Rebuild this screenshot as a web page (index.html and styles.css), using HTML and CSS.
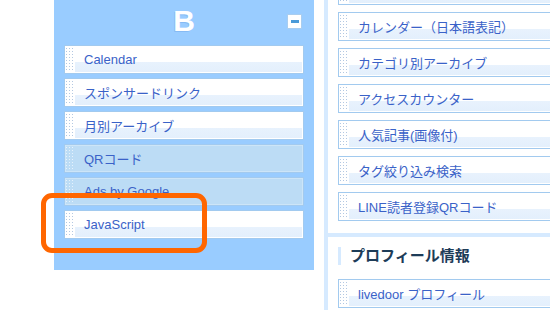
FILE: index.html
```html
<!doctype html>
<html lang="ja">
  <head>
    <meta charset="UTF-8" />
    <title>ブログパーツ</title>
    <link rel="stylesheet" href="styles.css">
  </head>
  <body>
    <div class="side">
      <div class="side-head">
        <span class="side-title">B</span>
        <span class="fold"><span class="fold-bar"></span></span>
      </div>
      <ul class="parts">
        <li class="part"><span class="grip"></span>Calendar</li>
        <li class="part"><span class="grip"></span>スポンサードリンク</li>
        <li class="part"><span class="grip"></span>月別アーカイブ</li>
        <li class="part off"><span class="grip"></span>QRコード</li>
        <li class="part off"><span class="grip"></span>Ads by Google</li>
        <li class="part"><span class="grip"></span>JavaScript</li>
      </ul>
    </div>

    <div class="main">
      <div class="box">
        <ul class="parts wide">
          <li class="part"><span class="grip"></span></li>
          <li class="part"><span class="grip"></span>カレンダー（日本語表記）</li>
          <li class="part"><span class="grip"></span>カテゴリ別アーカイブ</li>
          <li class="part"><span class="grip"></span>アクセスカウンター</li>
          <li class="part"><span class="grip"></span>人気記事(画像付)</li>
          <li class="part"><span class="grip"></span>タグ絞り込み検索</li>
          <li class="part"><span class="grip"></span>LINE読者登録QRコード</li>
        </ul>
      </div>
      <div class="box">
        <h3 class="box-title">プロフィール情報</h3>
        <ul class="parts wide">
          <li class="part"><span class="grip"></span>livedoor プロフィール</li>
        </ul>
      </div>
    </div>

    <!-- annotation -->
    <div class="mark"></div>
  </body>
</html>
```

FILE: styles.css
```css
body {
  margin: 0;
  padding-left: 54px;
  width: 550px;
  height: 310px;
  box-sizing: border-box;
  display: flex;
  align-items: flex-start;
  overflow: hidden;
  background: #fff;
  font-family: "Liberation Sans", "Noto Sans CJK JP", sans-serif;
  font-size: 13px;
  position: relative;
}

ul {
  list-style: none;
  margin: 0;
  padding: 0;
}

/* left column */
.side {
  width: 260px;
  height: 270px;
  flex-shrink: 0;
  padding: 0 10px;
  box-sizing: border-box;
  background: #99ccff;
}

.side-head {
  height: 45px;
  display: grid;
  grid-template-columns: 1fr auto 1fr;
}

.side-title {
  grid-column: 2;
  margin-top: 6px;
  font-size: 30px;
  line-height: 30px;
  font-weight: bold;
  color: #fff;
  text-shadow: -1px 1px 0 rgba(110, 165, 230, 0.45);
}

.fold {
  grid-column: 3;
  justify-self: end;
  width: 15px;
  height: 15px;
  margin: 14px 2px 0 0;
  box-sizing: border-box;
  background: #fff;
  border: 1px solid #a9cdef;
  display: flex;
  align-items: center;
  justify-content: center;
}

.fold-bar {
  width: 8px;
  height: 3px;
  background: #4a9ad8;
}

.parts {
  display: flex;
  flex-direction: column;
  gap: 4px;
}

.part {
  --grip-bg: #fff;
  --grip-dot: #b3c8e2;
  height: 29px;
  box-sizing: border-box;
  display: flex;
  align-items: center;
  border: 1px solid #a2caef;
  box-shadow: inset 0 0 0 1px #fff;
  background: linear-gradient(#fff 0, #fff 58%, #e8f2fd 58%, #e3effc 100%);
  color: #3a62c8;
  white-space: nowrap;
}

.part.off {
  --grip-bg: #bcdcf5;
  --grip-dot: #e6f2fc;
  background: #bcdcf5;
  box-shadow: inset 0 0 0 1px rgba(255, 255, 255, 0.25);
}

/* dotted drag handle: 1px dots on a 3px grid */
.grip {
  width: 9px;
  height: 24px;
  margin: 0 9px 0 1px;
  flex-shrink: 0;
  background-color: var(--grip-dot);
  background-image:
    linear-gradient(to right, transparent 1px, var(--grip-bg) 1px),
    linear-gradient(to bottom, transparent 1px, var(--grip-bg) 1px);
  background-size: 3px 3px;
}

/* right column */
.main {
  width: 260px;
  flex-shrink: 0;
  margin: -34px 0 0 10px;
  padding-left: 4px;
  display: flex;
  flex-direction: column;
  gap: 4px;
  background: #d6eaff;
}

.box {
  background: #fff;
  padding: 10px;
}

.parts.wide {
  gap: 7px;
  width: 300px;
}

.box:first-child {
  padding-bottom: 12px;
}

.box-title {
  margin: 0 0 14px;
  padding-left: 9px;
  border-left: 3px solid #d6eaff;
  font-size: 15px;
  line-height: 18px;
  color: #1d3c58;
}

/* orange highlight over the JavaScript part */
.mark {
  position: absolute;
  left: 41px;
  top: 193px;
  width: 166px;
  height: 60px;
  box-sizing: border-box;
  border: 5px solid #ff6600;
  border-radius: 11px;
}
```
